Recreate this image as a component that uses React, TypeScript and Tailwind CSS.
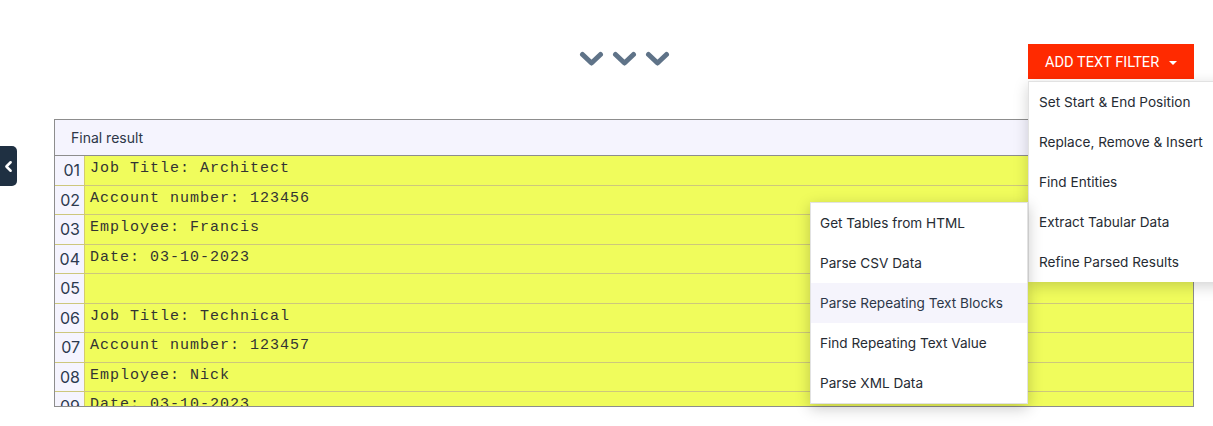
import { ChevronLeft } from "lucide-react";

const lines = [
  "Job Title: Architect",
  "Account number: 123456",
  "Employee: Francis",
  "Date: 03-10-2023",
  "",
  "Job Title: Technical",
  "Account number: 123457",
  "Employee: Nick",
  "Date: 03-10-2023",
];

const filters = [
  "Set Start & End Position",
  "Replace, Remove & Insert",
  "Find Entities",
  "Extract Tabular Data",
  "Refine Parsed Results",
];

const tabular = [
  "Get Tables from HTML",
  "Parse CSV Data",
  "Parse Repeating Text Blocks",
  "Find Repeating Text Value",
  "Parse XML Data",
];

function Chevron() {
  return (
    <svg width="25" height="16" viewBox="0 0 25 16" fill="none">
      <path
        d="M3.5 3.5 L12.5 12 L21.5 3.5"
        stroke="#5f7388"
        strokeWidth="5"
        strokeLinecap="round"
        strokeLinejoin="round"
      />
    </svg>
  );
}

export default function App() {
  return (
    <div className="relative h-[426px] w-full overflow-hidden bg-white font-['Inter',sans-serif] text-[#2d3748]">
      {/* sidebar toggle */}
      <button className="absolute left-0 top-[146px] flex h-[40px] w-[17px] items-center justify-center rounded-r-[5px] bg-[#1f3042] text-white">
        <ChevronLeft size={17} strokeWidth={3.5} />
      </button>

      <div className="pl-[54px] pr-[19px] pt-[44px]">
        {/* toolbar */}
        <div className="grid h-[35px] grid-cols-[1fr_auto_1fr]">
          <div />
          <div className="flex gap-[8px] pt-[7px]">
            <Chevron />
            <Chevron />
            <Chevron />
          </div>
          <div className="relative justify-self-end">
            <button className="flex h-[35px] w-[166px] items-center gap-[10px] bg-[#ff2a00] pl-[17px] pt-[2px] font-['Roboto',sans-serif] text-[14.6px] uppercase text-white">
              Add text filter
              <span className="mt-[1px] h-0 w-0 border-x-[4px] border-t-[4px] border-x-transparent border-t-white" />
            </button>

            {/* filter menu */}
            <div className="absolute left-0 top-[37px] z-10 w-[200px] border-l border-t border-[#e2e2e2] bg-white shadow-[0_4px_14px_rgba(0,0,0,0.18)]">
              {filters.map((f) => (
                <div key={f} className="flex h-[40px] items-center whitespace-nowrap pl-[10px] text-[13.6px] text-[#262b33]">
                  {f}
                </div>
              ))}

              {/* submenu */}
              <div className="absolute -left-[219px] top-[120px] w-[218px] border border-[#e2e2e2] bg-white shadow-[0_4px_14px_rgba(0,0,0,0.22)]">
                {tabular.map((t, i) => (
                  <div
                    key={t}
                    className={`flex h-[40px] items-center whitespace-nowrap pl-[9px] text-[13.6px] ${
                      i === 2 ? "bg-[#f5f4fc] text-[#2d3748]" : "text-[#262b33]"
                    }`}
                  >
                    {t}
                  </div>
                ))}
              </div>
            </div>
          </div>
        </div>

        {/* result panel */}
        <div className="mt-[40px] h-[288px] overflow-hidden border border-[#8d8d8d]">
          <div className="flex h-[36px] items-center border-b border-[#8d8d8d] bg-[#f5f4fe] pl-[16px] text-[14px] text-[#2d3748]">
            Final result
          </div>
          {lines.map((l, i) => (
            <div key={i} className="flex h-[29.5px] border-b border-[#cdc77c]">
              <div className="flex w-[30px] shrink-0 items-center justify-end border-r border-[#d3cb6e] bg-[#f5f4fe] pr-[4px] text-[16px] text-[#2d3a4f]">
                {String(i + 1).padStart(2, "0")}
              </div>
              <div className="flex flex-1 items-center bg-[#f0fc5c] pb-[2px] pl-[5px] font-['Liberation_Mono',monospace] text-[15px] tracking-[1px] text-[#333]">
                {l}
              </div>
            </div>
          ))}
        </div>
      </div>
    </div>
  );
}
